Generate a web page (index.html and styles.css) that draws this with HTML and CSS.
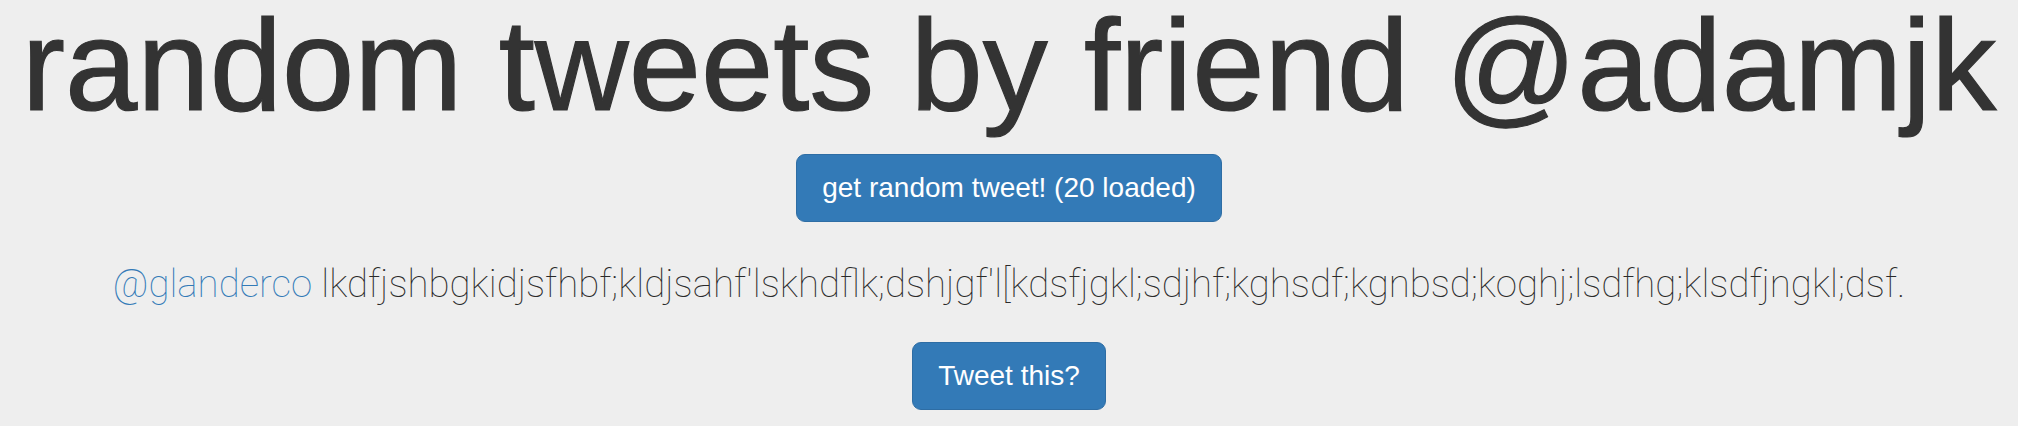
FILE: index.html
```html
<!DOCTYPE html>
<html lang="en">
<head>
<meta charset="utf-8">
<title>random tweets</title>
<link rel="stylesheet" href="styles.css">
</head>
<body>
<main class="page">
  <h1 class="title">random tweets by friend @adamjk</h1>
  <button class="btn btn-get">get random tweet! (20 loaded)</button>
  <p class="tweet"><a class="handle" href="#">@glanderco</a> lkdfjshbgkidjsfhbf;kldjsahf'lskhdflk;dshjgf'l[kdsfjgkl;sdjhf;kghsdf;kgnbsd;koghj;lsdfhg;klsdfjngkl;dsf.</p>
  <button class="btn btn-tweet">Tweet this?</button>
</main>
</body>
</html>
```
FILE: styles.css
```css
html, body {
  margin: 0;
  padding: 0;
  background: #eeeeee;
}
body {
  font-family: "Liberation Sans", Arial, sans-serif;
  color: #333333;
}
.page {
  display: flex;
  flex-direction: column;
  align-items: center;
}
.title {
  margin: 0;
  font-size: 130px;
  line-height: 1;
  font-weight: 400;
  color: #333333;
  -webkit-text-stroke: 1.2px #333333;
  white-space: nowrap;
}
.btn {
  font-family: "Liberation Sans", Arial, sans-serif;
  font-size: 28px;
  line-height: 36px;
  padding: 15px 25px;
  color: #ffffff;
  background: #337ab7;
  border: 1px solid #2e6da4;
  border-radius: 9px;
  cursor: pointer;
}
.btn-get {
  margin-top: 24px;
}
.tweet {
  margin: 34px 0 0;
  font-family: Roboto, "Noto Sans", sans-serif;
  font-weight: 100;
  font-size: 38.4px;
  line-height: 56px;
  color: #2a2a2a;
  white-space: nowrap;
}
.handle {
  color: #337ab7;
  text-decoration: none;
}
.btn-tweet {
  margin-top: 30px;
}
```
